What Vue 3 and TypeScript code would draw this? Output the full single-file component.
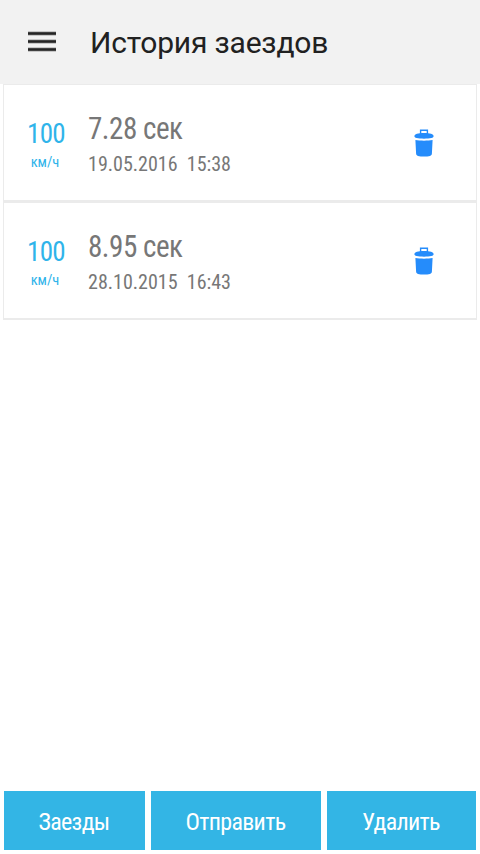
<script setup lang="ts">
interface Run {
  id: number
  speed: number
  seconds: string
  date: string
  time: string
}

const runs: Run[] = [
  { id: 1, speed: 100, seconds: '7.28', date: '19.05.2016', time: '15:38' },
  { id: 2, speed: 100, seconds: '8.95', date: '28.10.2015', time: '16:43' },
]

const actions: string[] = ['Заезды', 'Отправить', 'Удалить']
</script>

<template>
  <div class="screen">
    <header class="bar">
      <svg class="menu" viewBox="0 0 28 22" width="28" height="22" aria-hidden="true">
        <path d="M0 2.5h28M0 10.5h28M0 18.5h28" stroke="#9b9b9b" stroke-width="4" />
        <path d="M0 2.5h28M0 10.5h28M0 18.5h28" stroke="#242424" stroke-width="2.4" />
      </svg>
      <h1 class="title">История заездов</h1>
    </header>

    <main class="list">
      <article v-for="run in runs" :key="run.id" class="card">
        <div class="speed">
          <span class="value">{{ run.speed }}</span>
          <span class="unit">км/ч</span>
        </div>
        <div class="result">
          <span class="seconds">{{ run.seconds }} сек</span>
          <span class="date">{{ run.date }}&nbsp; {{ run.time }}</span>
        </div>
        <svg class="trash" viewBox="0 0 20 28" width="20" height="28" aria-hidden="true">
          <path d="M6.600 5V1.200h6.800V5" fill="none" stroke="#258cfb" stroke-width="1.400" />
          <path d="M0.400 7.100C0.400 5.100 4 4 10 4s9.600 1.100 9.600 3.100c0 1.200-.7 1.700-2.200 2-3.800.7-11 .7-14.800 0C1.100 8.800.4 8.300.4 7.100z" fill="#258cfb" />
          <path d="M1.400 11.100c4.500.8 12.700.8 17.200 0l-.7 13.500c-.1 1.400-.7 2-1.900 2.300-3.100.7-8.900.7-12 0-1.200-.3-1.800-.9-1.900-2.300z" fill="#258cfb" />
        </svg>
      </article>
    </main>

    <footer class="actions">
      <button v-for="label in actions" :key="label" class="action" type="button">{{ label }}</button>
    </footer>
  </div>
</template>

<style>
body {
  margin: 0;
}
</style>

<style scoped>
.screen {
  display: flex;
  flex-direction: column;
  box-sizing: border-box;
  width: 480px;
  height: 854px;
  background: #fff;
  font-family: 'Roboto Condensed', Roboto, sans-serif;
  font-stretch: 75%;
}

.bar {
  display: flex;
  align-items: center;
  gap: 34px;
  height: 84px;
  padding-left: 28px;
  background: #f2f2f2;
}

.menu {
  display: block;
}

.title {
  margin: 2px 0 0;
  color: #212121;
  font: 400 30px/36px Roboto, sans-serif;
  letter-spacing: -0.2px;
}

.list {
  flex: 1;
  padding: 0 3px;
}

.card {
  display: flex;
  box-sizing: border-box;
  height: 118px;
  border: 1px solid #ebebeb;
  border-bottom-width: 2px;
  background: #fff;
}

.speed {
  display: flex;
  flex-direction: column;
  align-items: center;
  width: 84px;
  padding-top: 33px;
  color: #2fb4ea;
  white-space: nowrap;
}

.value {
  font-size: 27px;
  line-height: 32px;
  letter-spacing: -0.7px;
}

.unit {
  margin: 5px 2px 0 0;
  font-size: 14.5px;
  line-height: 16px;
}

.result {
  display: flex;
  flex: 1;
  flex-direction: column;
  align-items: flex-start;
  color: #777;
  white-space: nowrap;
}

.seconds,
.date {
  transform: scaleX(0.953);
  transform-origin: 0 50%;
}

.seconds {
  margin-top: 26px;
  font-size: 30.5px;
  line-height: 36px;
  letter-spacing: -0.5px;
}

.date {
  margin-top: 4px;
  font-size: 21px;
  line-height: 26px;
}

.trash {
  margin: 44px 42px 0 0;
}

.actions {
  display: grid;
  grid-template-columns: 141px 170px 149px;
  gap: 6px;
  padding: 0 4px 4px;
}

.action {
  height: 59px;
  padding: 2px 1px 0 0;
  border: 0;
  background: #33b5e5;
  color: #fff;
  font: inherit;
  font-size: 24px;
  line-height: 28px;
  letter-spacing: -0.7px;
}
</style>
